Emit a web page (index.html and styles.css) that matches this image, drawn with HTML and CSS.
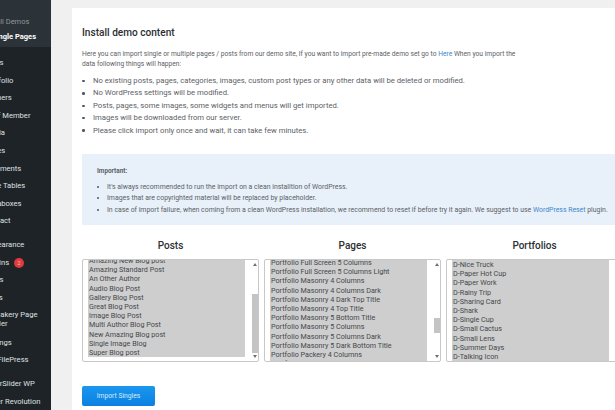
FILE: index.html
```html
<!doctype html>
<html>
<head>
<meta charset="utf-8">
<title>Install demo content</title>
<link rel="stylesheet" href="styles.css">
</head>
<body>
<aside class="sidebar">
  <div class="submenu">
    <div class="submenu-item">Full Demos</div>
    <div class="submenu-item current">Single Pages</div>
  </div>
  <ul class="menu">
    <li>Posts</li>
    <li>Portfolio</li>
    <li>Banners</li>
    <li>Staff Member</li>
    <li>Media</li>
    <li>Pages</li>
    <li>Comments</li>
    <li>Price Tables</li>
    <li>Metaboxes</li>
    <li>Contact</li>
  </ul>
  <ul class="menu">
    <li>Appearance</li>
    <li>Plugins <span class="badge">2</span></li>
    <li>Users</li>
    <li>Tools</li>
    <li class="tall">WPBakery Page Builder</li>
    <li>Settings</li>
    <li>WP FilePress</li>
  </ul>
  <ul class="menu">
    <li>LayerSlider WP</li>
    <li>Slider Revolution</li>
  </ul>
</aside>
<main class="content">
  <section class="panel">
    <h2 class="title">Install demo content</h2>
    <p class="intro">Here you can import single or multiple pages / posts from our demo site, If you want to import pre-made demo set go to <a href="#">Here</a> When you import the data following things will happen:</p>
    <ul class="steps">
      <li>No existing posts, pages, categories, images, custom post types or any other data will be deleted or modified.</li>
      <li>No WordPress settings will be modified.</li>
      <li>Posts, pages, some images, some widgets and menus will get imported.</li>
      <li>Images will be downloaded from our server.</li>
      <li>Please click import only once and wait, it can take few minutes.</li>
    </ul>
    <div class="notice">
      <h3>Important:</h3>
      <ul>
        <li>It's always recommended to run the import on a clean installtion of WordPress.</li>
        <li>Images that are copyrighted material will be replaced by placeholder.</li>
        <li>In case of import failure, when coming from a clean WordPress installation, we recommend to reset if before try it again. We suggest to use <a href="#">WordPress Reset</a> plugin.</li>
      </ul>
    </div>
    <div class="pickers">
      <div class="picker">
        <h3>Posts</h3>
        <div class="listbox">
          <ul class="options posts-list">
            <li>Amazing New Blog post</li>
            <li>Amazing Standard Post</li>
            <li>An Other Author</li>
            <li>Audio Blog Post</li>
            <li>Gallery Blog Post</li>
            <li>Great Blog Post</li>
            <li>Image Blog Post</li>
            <li>Multi Author Blog Post</li>
            <li>New Amazing Blog post</li>
            <li>Single Image Blog</li>
            <li>Super Blog post</li>
          </ul>
          <div class="scrollbar">
            <i class="arrow up"></i>
            <div class="track posts-track"><b></b></div>
            <i class="arrow down"></i>
          </div>
        </div>
      </div>
      <div class="picker">
        <h3>Pages</h3>
        <div class="listbox">
          <ul class="options pages-list">
            <li>Portfolio Full Screen 5 Columns</li>
            <li>Portfolio Full Screen 5 Columns Light</li>
            <li>Portfolio Masonry 4 Columns</li>
            <li>Portfolio Masonry 4 Columns Dark</li>
            <li>Portfolio Masonry 4 Dark Top Title</li>
            <li>Portfolio Masonry 4 Top Title</li>
            <li>Portfolio Masonry 5 Bottom Title</li>
            <li>Portfolio Masonry 5 Columns</li>
            <li>Portfolio Masonry 5 Columns Dark</li>
            <li>Portfolio Masonry 5 Dark Bottom Title</li>
            <li>Portfolio Packery 4 Columns</li>
            <li>Portfolio Packery 5 Columns</li>
          </ul>
          <div class="scrollbar">
            <i class="arrow up"></i>
            <div class="track pages-track"><b></b></div>
            <i class="arrow down"></i>
          </div>
        </div>
      </div>
      <div class="picker">
        <h3>Portfolios</h3>
        <div class="listbox">
          <ul class="options">
            <li>D-Nice Truck</li>
            <li>D-Paper Hot Cup</li>
            <li>D-Paper Work</li>
            <li>D-Rainy Trip</li>
            <li>D-Sharing Card</li>
            <li>D-Shark</li>
            <li>D-Single Cup</li>
            <li>D-Small Cactus</li>
            <li>D-Small Lens</li>
            <li>D-Summer Days</li>
            <li>D-Talking Icon</li>
          </ul>
          <div class="scrollbar"></div>
        </div>
      </div>
    </div>
    <button class="import-btn">Import Singles</button>
  </section>
</main>
</body>
</html>
```

FILE: styles.css
```css
* {
    box-sizing: border-box;
}
html,
body {
    height: 410px;
    overflow: hidden;
}
body {
    margin: 0;
    display: flex;
    background-color: #f0f0f0;
    font-family: Roboto, "Liberation Sans", sans-serif;
    color: #5c6166;
}
ul,
h2,
h3,
p {
    margin: 0;
    padding: 0;
}
ul {
    list-style: none;
}
a {
    color: #3f87cc;
    text-decoration: none;
}

/* admin sidebar, cut off by the left edge of the shot */
.sidebar {
    flex: 0 0 51px;
    height: 410px;
    overflow: hidden;
    background-color: #1d2327;
    color: #dfe1e2;
    font-size: 7.6px;
    line-height: 17.6px;
    white-space: nowrap;
}
.submenu {
    height: 47px;
    margin-bottom: 7px;
    padding-top: 14px;
    background-color: #2c3338;
}
.submenu-item {
    margin-left: -8px;
    height: 15px;
    line-height: 15px;
    font-size: 7.5px;
    color: #8f9599;
}
.submenu-item.current {
    color: #fff;
    font-weight: 700;
}
.menu {
    margin: 0 0 6px -16px;
}
.menu li {
    height: 17.6px;
}
.menu li.tall {
    height: 27.5px;
    width: 64px;
    line-height: 9px;
    padding-top: 4px;
    white-space: normal;
}
.badge {
    display: inline-block;
    width: 10px;
    height: 10px;
    margin-left: 3px;
    border-radius: 50%;
    background-color: #e03a3e;
    color: #f3b9ba;
    font-size: 6px;
    line-height: 10px;
    text-align: center;
}

.content {
    flex: 1;
    min-width: 0;
    padding: 8px 0 0 21px;
}
.panel {
    width: 561px;
    height: 402px;
    padding: 18px 10px 0;
    background-color: #fff;
}
.title {
    color: #2b2f33;
    font-size: 10.1px;
    line-height: 13px;
    font-weight: 500;
}
.intro {
    width: 445px;
    margin-top: 10px;
    font-size: 6.7px;
    line-height: 10px;
}
.steps {
    margin-top: 6px;
    font-size: 7.7px;
    line-height: 12.4px;
}
.steps li::before,
.notice li::before {
    content: "";
    display: inline-block;
    width: 2.5px;
    height: 2.5px;
    margin-right: 8.5px;
    border-radius: 50%;
    background-color: #50575e;
    vertical-align: middle;
}
.notice {
    height: 71px;
    margin-top: 17px;
    padding: 12px 15px 0;
    background-color: #e8f0f9;
    font-size: 6.9px;
    line-height: 11.5px;
}
.notice h3 {
    margin-bottom: 4px;
    font-size: 6.4px;
    font-weight: 700;
}
.notice li::before {
    width: 2px;
    height: 2px;
    margin-right: 8px;
}
.pickers {
    display: grid;
    grid-template-columns: repeat(3, 177px);
    gap: 5px;
    margin-top: 14px;
}
.picker h3 {
    height: 20px;
    color: #2b2f33;
    font-size: 10px;
    line-height: 13px;
    font-weight: 500;
    text-align: center;
}
.listbox {
    display: flex;
    height: 103px;
    overflow: hidden;
    background-color: #fff;
    border: 1px solid #c8c8c8;
    border-radius: 2px;
}
.options {
    flex: 1;
    min-width: 0;
    padding: 0 7px 0 5px;
    overflow: hidden;
    font-size: 7.2px;
    line-height: 9.2px;
    color: #44484c;
}
.options li {
    height: 9.2px;
    padding-left: 1px;
    background-color: #cecece;
}
.posts-list {
    margin-top: -4px;
}
.pages-list {
    margin-top: -2px;
}
.scrollbar {
    flex: 0 0 6px;
    display: flex;
    flex-direction: column;
    align-items: center;
}
.arrow {
    flex: none;
    width: 0;
    height: 0;
    border-left: 2.5px solid transparent;
    border-right: 2.5px solid transparent;
}
.arrow.up {
    margin: 3px 0;
    border-bottom: 3px solid #707070;
}
.arrow.down {
    margin: 1px 0 3px;
    border-top: 3px solid #707070;
}
.track {
    flex: 1;
    width: 100%;
}
.track b {
    display: block;
    width: 100%;
    background-color: #c4c4c4;
}
.posts-track {
    padding-top: 25px;
}
.posts-track b {
    height: 59px;
}
.pages-track {
    padding-top: 48.7px;
}
.pages-track b {
    height: 15.5px;
}
.import-btn {
    display: block;
    width: 73px;
    height: 20px;
    margin-top: 24px;
    border: 0;
    border-radius: 2px;
    background: linear-gradient(#1a97ee, #0b80e2);
    color: #d5ebfb;
    font-family: inherit;
    font-size: 6.75px;
}
```
